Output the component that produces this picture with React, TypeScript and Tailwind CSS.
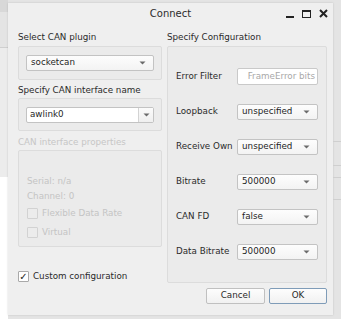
const font = { fontFamily: '"DejaVu Sans", sans-serif' };

const Arrow = () => (
  <svg width="7" height="4" viewBox="0 0 7 4" className="shrink-0">
    <path d="M0.5 0.5 L6.5 0.5 L3.5 3.5 Z" fill="#6b6b6b" />
  </svg>
);

const Combo = ({ value, className = "" }: { value: string; className?: string }) => (
  <div
    className={`h-[16px] flex items-center justify-between pl-[4px] pr-[7px] rounded-[2px] border border-[#c3c3c3] bg-gradient-to-b from-[#fdfdfd] to-[#f3f3f3] text-[#1e1e1e] ${className}`}
  >
    <span>{value}</span>
    <Arrow />
  </div>
);

const Check = ({ checked, disabled, label }: { checked?: boolean; disabled?: boolean; label: string }) => (
  <div className="flex items-center gap-[4px]">
    <div
      className={`w-[11px] h-[11px] border rounded-[1px] flex items-center justify-center text-[10px] leading-none ${
        disabled ? "border-[#d2d2d2] bg-[#ececec]" : "border-[#a9a9a9] bg-white text-[#222]"
      }`}
    >
      {checked ? "✓" : ""}
    </div>
    <span className={disabled ? "text-[#c4c4c4]" : "text-[#2a2a2a]"}>{label}</span>
  </div>
);

const Row = ({ label, children }: { label: string; children: React.ReactNode }) => (
  <div className="h-[35px] flex items-center">
    <span className="w-[62px] text-[#2a2a2a]">{label}</span>
    {children}
  </div>
);

export default function App() {
  return (
    <div className="w-[341px] h-[319px] bg-[#e4e4e4] overflow-hidden flex" style={font}>
      {/* desktop strip on the left */}
      <div className="w-[8px] flex flex-col">
        <div className="h-[12px] bg-[#d8d8d8]" />
        <div className="h-[130px] mt-[35px] border-t border-[#cfcfcf] bg-[#ececec]" />
        <div className="flex-1 bg-white" />
      </div>

      {/* dialog */}
      <div className="mt-[3px] w-[325px] h-[312px] bg-[#efefef] flex flex-col text-[8.75px] shadow-[0_0_2px_rgba(0,0,0,0.15)]">
        {/* title bar */}
        <div className="h-[22px] flex items-start relative">
          <div className="flex-1 text-center text-[10px] text-[#2b2b2b] pt-[3px]">Connect</div>
          <div className="absolute right-[5px] top-[6px] flex items-center gap-[8px] text-[#222]">
            <div className="w-[8px] h-[9px] flex items-end">
              <div className="w-[8px] h-[2px] bg-[#222]" />
            </div>
            <div className="w-[9px] h-[8px] border-[1.5px] border-t-[2px] border-[#222]" />
            <svg width="9" height="9" viewBox="0 0 9 9">
              <path d="M1 1 L8 8 M8 1 L1 8" stroke="#222" strokeWidth="2" />
            </svg>
          </div>
        </div>

        {/* body */}
        <div className="flex pl-[10px] pr-[6px] gap-[5px]">
          {/* left column */}
          <div className="w-[144px] flex flex-col">
            <div className="h-[21px] flex items-end pb-[2px] text-[#2a2a2a]">Select CAN plugin</div>
            <div className="h-[34px] border border-[#dcdcdc] rounded-[2px] bg-[#ebebeb] px-[7px] pt-[8px]">
              <Combo value="socketcan" />
            </div>
            <div className="h-[18px] flex items-end pb-[1px] text-[#2a2a2a]">Specify CAN interface name</div>
            <div className="h-[33px] border border-[#dcdcdc] rounded-[2px] bg-[#ebebeb] px-[7px] pt-[8px]">
              <div className="h-[16px] flex border border-[#c3c3c3] rounded-[2px] bg-white">
                <div className="flex-1 pl-[3px] flex items-center text-[#1e1e1e]">awlink0</div>
                <div className="w-[15px] border-l border-[#d3d3d3] bg-gradient-to-b from-[#fbfbfb] to-[#efefef] flex items-center justify-center">
                  <Arrow />
                </div>
              </div>
            </div>
            <div className="h-[19px] flex items-end pb-[1px] text-[#c6c6c6]">CAN interface properties</div>
            <div className="h-[97px] border border-[#dcdcdc] rounded-[2px] bg-[#ebebeb] px-[8px] pt-[23px] flex flex-col text-[#c4c4c4]">
              <div className="h-[15px] flex items-center">Serial: n/a</div>
              <div className="h-[15px] flex items-center">Channel: 0</div>
              <div className="h-[19px] flex items-center">
                <Check disabled label="Flexible Data Rate" />
              </div>
              <div className="h-[19px] flex items-center">
                <Check disabled label="Virtual" />
              </div>
            </div>
            <div className="mt-[23px]">
              <Check checked label="Custom configuration" />
            </div>
          </div>

          {/* right column */}
          <div className="w-[160px] flex flex-col">
            <div className="h-[21px] flex items-end pb-[2px] text-[#2a2a2a]">Specify Configuration</div>
            <div className="h-[237px] border border-[#dcdcdc] rounded-[2px] bg-[#ebebeb] pl-[8px] pr-[8px] pt-[12px]">
              <Row label="Error Filter">
                <div className="w-[82px] h-[17px] border border-[#c9c9c9] rounded-[2px] bg-white flex items-center justify-end pr-[2px] text-[#a8a8a8]">
                  FrameError bits
                </div>
              </Row>
              <Row label="Loopback">
                <Combo value="unspecified" className="w-[82px]" />
              </Row>
              <Row label="Receive Own">
                <Combo value="unspecified" className="w-[82px]" />
              </Row>
              <Row label="Bitrate">
                <Combo value="500000" className="w-[82px]" />
              </Row>
              <Row label="CAN FD">
                <Combo value="false" className="w-[82px]" />
              </Row>
              <Row label="Data Bitrate">
                <Combo value="500000" className="w-[82px]" />
              </Row>
            </div>
            <div className="flex justify-end gap-[4px] mt-[5px]">
              <button className="w-[59px] h-[16px] border border-[#c0c0c0] rounded-[2px] bg-gradient-to-b from-[#fdfdfd] to-[#f1f1f1] text-[#2a2a2a]">
                Cancel
              </button>
              <button className="w-[58px] h-[16px] border border-[#7f9cb8] rounded-[2px] bg-gradient-to-b from-[#fdfdfd] to-[#f1f1f1] text-[#2a2a2a]">
                OK
              </button>
            </div>
          </div>
        </div>
      </div>

      {/* desktop strip on the right */}
      <div className="flex-1 flex flex-col pt-[141px]">
        <div className="h-[24px] border-t border-[#cfcfcf]" />
        <div className="h-[12px] border-t border-[#cfcfcf]" />
        <div className="h-[22px] border-t border-[#cfcfcf]" />
        <div className="border-t border-[#cfcfcf]" />
      </div>
    </div>
  );
}
